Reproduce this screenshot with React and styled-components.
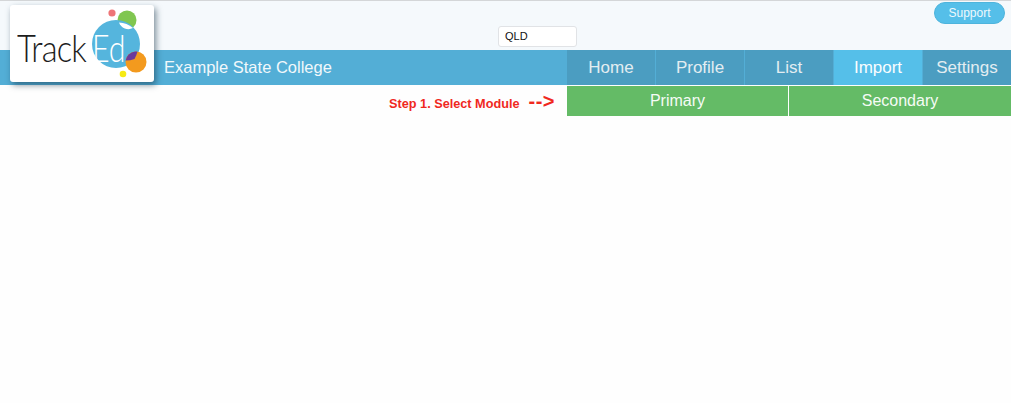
import styled, { createGlobalStyle } from "styled-components";

const GlobalStyle = createGlobalStyle`
  html, body {
    margin: 0;
    padding: 0;
    background: #fefefe;
    font-family: "Liberation Sans", Arial, sans-serif;
  }
`;

const Page = styled.div`
  position: relative;
  width: 1011px;
  height: 403px;
  overflow: hidden;
`;

const TopBar = styled.header`
  height: 49px;
  border-top: 1px solid #d4d6d8;
  background: #f5f9fc;
  box-sizing: content-box;
  display: grid;
  grid-template-columns: 498px 79px 1fr;
`;

const StateBox = styled.div`
  grid-column: 2;
  margin-top: 25px;
  height: 21px;
  box-sizing: border-box;
  border: 1px solid #e1e3e6;
  border-radius: 3px;
  background: #fff;
  padding-left: 6px;
  font-size: 11px;
  line-height: 19px;
  color: #111;
`;

const SupportCell = styled.div`
  grid-column: 3;
  display: flex;
  justify-content: flex-end;
  padding: 1px 6px 0 0;
  align-items: flex-start;
`;

const SupportButton = styled.button`
  width: 71px;
  height: 22px;
  padding: 0;
  border: 1px solid #4eb4dc;
  border-radius: 11px;
  background: #55bfe9;
  color: #eef9fd;
  font-family: inherit;
  font-size: 12px;
`;

const NavBar = styled.nav`
  height: 35px;
  display: flex;
  background: #53aed6;
`;

const SchoolName = styled.div`
  width: 567px;
  box-sizing: border-box;
  padding-left: 164px;
  font-size: 16.5px;
  line-height: 35px;
  color: #f1f8fb;
`;

const NavItems = styled.div`
  flex: 1;
  display: grid;
  grid-template-columns: repeat(5, 88px);
  column-gap: 1px;
`;

const NavItem = styled.a`
  text-align: center;
  font-size: 17px;
  line-height: 35px;
  background: ${(p) => (p.$active ? "#55bfe9" : "#4b9dc1")};
  color: ${(p) => (p.$active ? "#fafdff" : "#e3edf1")};
  font-weight: ${(p) => (p.$active ? 400 : 400)};
`;

const ModuleRow = styled.div`
  display: flex;
  margin-top: 1px;
  height: 30px;
`;

const StepHint = styled.div`
  width: 555px;
  margin-right: 12px;
  display: flex;
  justify-content: flex-end;
  align-items: center;
  gap: 9px;
  color: #f0281e;
  font-weight: 700;
`;

const StepLabel = styled.span`
  font-size: 12.7px;
  line-height: 30px;
  padding-top: 5px;
`;

const StepArrow = styled.span`
  font-size: 20px;
  line-height: 30px;
  letter-spacing: 0.5px;
`;

const ModuleTabs = styled.div`
  flex: 1;
  display: grid;
  grid-template-columns: 221px 222px;
  column-gap: 1px;
`;

const ModuleTab = styled.a`
  background: #64bb66;
  color: #f6fbf6;
  text-align: center;
  font-size: 16px;
  line-height: 30px;
`;

const LogoCard = styled.div`
  position: absolute;
  left: 10px;
  top: 5px;
  width: 144px;
  height: 77px;
  border-radius: 3px;
  background: #fff;
  box-shadow: 2px 3px 6px rgba(20, 50, 70, 0.55);
  overflow: hidden;
`;

const LogoArt = styled.svg`
  position: absolute;
  left: 0;
  top: 0;
`;

const LogoTrack = styled.span`
  position: absolute;
  left: 7px;
  top: 20px;
  font-family: "Lato", sans-serif;
  font-weight: 300;
  font-size: 38px;
  line-height: 44px;
  letter-spacing: -0.9px;
  color: #1c1c1c;
  transform: scaleX(0.86);
  transform-origin: left center;
`;

const LogoEd = styled.span`
  position: absolute;
  left: 82px;
  top: 20px;
  font-family: "Lato", sans-serif;
  font-weight: 300;
  font-size: 38px;
  line-height: 44px;
  color: #fff;
  transform: scaleX(0.8);
  transform-origin: left center;
`;

const Logo = () => (
  <LogoCard>
    <LogoArt width="144" height="77" viewBox="0 0 144 77">
      <circle cx="102" cy="8" r="3.6" fill="#ee7577" />
      <circle cx="117" cy="15" r="9.5" fill="#80c650" />
      <circle cx="106" cy="39" r="24" fill="#55b5dd" />
      <path d="M109 17.5 A24 24 0 0 1 123 23 A10 10 0 0 1 109 17.5 Z" fill="#fff" />
      <circle cx="126" cy="57" r="10.5" fill="#f39a1e" />
      <path d="M125 46.5 A10.5 10.5 0 0 0 115.6 55.6 A24 24 0 0 0 124.5 54 A24 24 0 0 0 127.5 46.6 Z" fill="#6b3a9c" />
      <circle cx="113" cy="69" r="3.3" fill="#f6ea14" />
    </LogoArt>
    <LogoTrack>Track</LogoTrack>
    <LogoEd>Ed</LogoEd>
  </LogoCard>
);

const navLabels = ["Home", "Profile", "List", "Import", "Settings"];

const App = () => {
  return (
    <Page>
      <GlobalStyle />
      <TopBar>
        <StateBox>QLD</StateBox>
        <SupportCell>
          <SupportButton>Support</SupportButton>
        </SupportCell>
      </TopBar>
      <NavBar>
        <SchoolName>Example State College</SchoolName>
        <NavItems>
          {navLabels.map((label) => (
            <NavItem key={label} $active={label === "Import"}>
              {label}
            </NavItem>
          ))}
        </NavItems>
      </NavBar>
      <ModuleRow>
        <StepHint>
          <StepLabel>Step 1. Select Module</StepLabel>
          <StepArrow>--&gt;</StepArrow>
        </StepHint>
        <ModuleTabs>
          <ModuleTab>Primary</ModuleTab>
          <ModuleTab>Secondary</ModuleTab>
        </ModuleTabs>
      </ModuleRow>
      <Logo />
    </Page>
  );
};

export default App;
